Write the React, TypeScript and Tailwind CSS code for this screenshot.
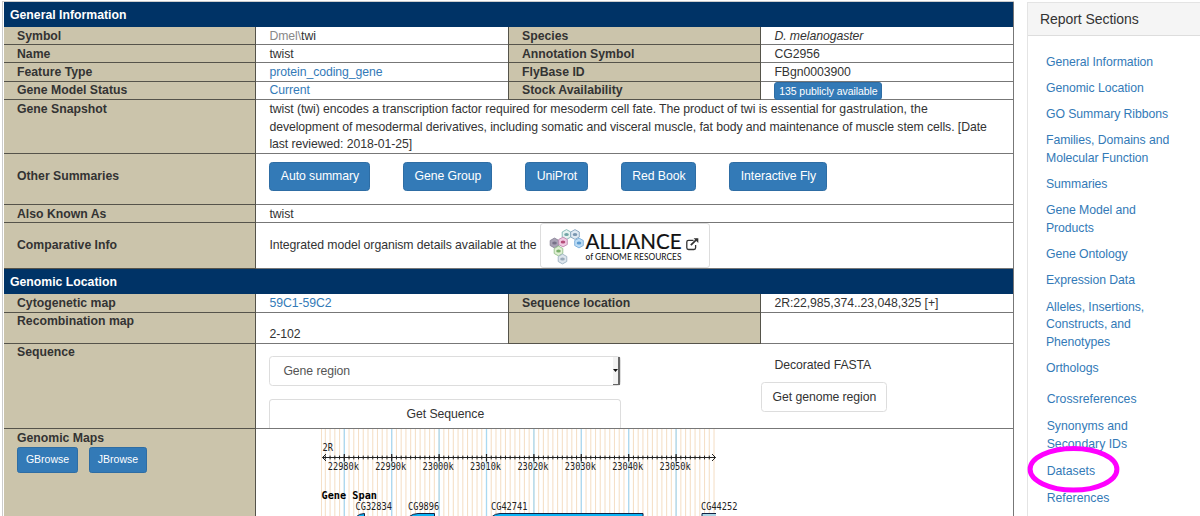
import React from 'react'

const LABEL = "bg-[#cbc4ab] border-[#55534a] pl-[13px] font-bold tracking-normal shrink-0"

const Heading = ({ children }: { children: React.ReactNode }) => (
    <h2 className="h-[25px] shrink-0 bg-[#003366] text-white font-bold tracking-normal pl-[6px] leading-[26px]">{children}</h2>
)

type RowProps = {
    label: React.ReactNode;
    height: string;
    labelClass?: string;
    valueClass?: string;
    label2?: string;
    value2?: React.ReactNode;
    children: React.ReactNode;
}

const Row = ({ label, height, labelClass = "pt-px", valueClass = "pt-px", label2, value2, children }: RowProps) => (
    <div className={"flex shrink-0 border-[#666] " + height}>
        <div className={LABEL + " w-[252px] border-r border-b " + labelClass}>{label}</div>
        <div className={"flex-1 border-b border-[#777] pl-[13.4px] " + valueClass}>{children}</div>
        {label2 !== undefined && (
            <>
                <div className={LABEL + " w-[253px] border-x border-b " + labelClass}>{label2}</div>
                <div className="w-[252px] shrink-0 border-b border-[#777] pl-[13.4px] pt-px">{value2}</div>
            </>
        )}
    </div>
)

const BlueLink = ({ children }: { children: React.ReactNode }) => (
    <a href="#" className="text-[#337ab7]">{children}</a>
)

const summaries = [
    { name: "Auto summary", width: "w-[101px]" },
    { name: "Gene Group", width: "w-[89px]" },
    { name: "UniProt", width: "w-[63px]" },
    { name: "Red Book", width: "w-[75px]" },
    { name: "Interactive Fly", width: "w-[98px]" },
]

const sections = [
    ["General Information"],
    ["Genomic Location"],
    ["GO Summary Ribbons"],
    ["Families, Domains and", "Molecular Function"],
    ["Summaries"],
    ["Gene Model and", "Products"],
    ["Gene Ontology"],
    ["Expression Data"],
    ["Alleles, Insertions,", "Constructs, and", "Phenotypes"],
    ["Orthologs"],
]

const moreSections = [
    ["Crossreferences"],
    ["Synonyms and", "Secondary IDs"],
    ["Datasets"],
    ["References"],
]

const hexes = [
    { x: 16.5, y: 5.5, fill: "#e6f2f1", stroke: "#7fb5b3", dot: "#4a8a8c" },
    { x: 25, y: 5.5, fill: "#dfe9f2", stroke: "#86a3bd", dot: "#58799a" },
    { x: 4.5, y: 14, fill: "#a9a3b5", stroke: "#8a8499", dot: "#67607a" },
    { x: 13, y: 13, fill: "#f0c9e2", stroke: "#bd8db2", dot: "#a02355" },
    { x: 29, y: 14, fill: "#bcdcf5", stroke: "#79aedb", dot: "#3a84c4" },
    { x: 8.5, y: 22, fill: "#e0f0d4", stroke: "#93c08a", dot: "#5a9a4a" },
    { x: 12.5, y: 30, fill: "#dde5ec", stroke: "#9db2c2", dot: "#8296a8" },
]

const AllianceLogo = () => (
    <svg width="150" height="38" viewBox="0 0 150 38" className="block overflow-visible tracking-normal">
        {hexes.map((h, i) => (
            <g key={i} transform={`translate(${h.x} ${h.y})`}>
                <path d="M0 -4.9 L4.3 -2.5 V2.5 L0 4.9 L-4.3 2.5 V-2.5 Z" fill={h.fill} stroke={h.stroke} strokeWidth="0.9" />
                <ellipse rx="2.3" ry="1.5" fill={h.dot} opacity="0.75" />
            </g>
        ))}
        <text x="35.5" y="19.5" fontFamily="Lato, sans-serif" fontSize="21.5" fill="#111" stroke="#111" strokeWidth="0.2" textLength="96" lengthAdjust="spacingAndGlyphs">ALLIANCE</text>
        <text x="35.5" y="31" fontFamily="Lato, sans-serif" fontSize="10.2" fill="#111" textLength="96" lengthAdjust="spacingAndGlyphs">of GENOME RESOURCES</text>
        <g fill="none" stroke="#333" strokeWidth="1.3">
            <path d="M143.5 11.3 H138.5 Q136.8 11.3 136.8 13 V18.8 Q136.8 20.5 138.5 20.5 H144 Q145.6 20.5 145.6 18.8 V16" />
            <path d="M140.8 16.2 L147 10.2" strokeWidth="1.7" />
        </g>
        <path d="M143.6 9.2 H148.3 V13.9 Z" fill="#333" />
    </svg>
)

const ticks = Array.from({ length: 83 }, (_, i) => 4.34 + i * 4.74)
const majors = [22980, 22990, 23000, 23010, 23020, 23030, 23040, 23050]
const genes = [
    { name: "CG32834", x: 34.5 },
    { name: "CG9896", x: 87 },
    { name: "CG42741", x: 170 },
    { name: "CG44252", x: 380 },
]

const GenomeMap = () => (
    <svg width="430" height="87" viewBox="0 0 430 87" className="tracking-normal" fontFamily="'DejaVu Sans Mono', monospace" fontSize="9.8" fill="#222">
        <line x1="0.5" x2="0.5" y1="0" y2="87" stroke="#f5e0c8" />
        {ticks.map((x) => (
            <line key={x} x1={x} x2={x} y1="0" y2="87" stroke="#f5e0c8" strokeWidth="1.1" />
        ))}
        {majors.map((m, i) => (
            <line key={m} x1={23.3 + i * 47.4} x2={23.3 + i * 47.4} y1="0" y2="87" stroke="#a9d9f2" strokeWidth="1.3" />
        ))}
        <g stroke="#222" fill="none">
            <path d="M1.5 28.5 H394.5" strokeWidth="1" />
            <path d="M5 25 L1.5 28.5 L5 32 M391 25 L394.5 28.5 L391 32" strokeWidth="1" />
            {ticks.slice(0, 82).map((x) => (
                <line key={x} x1={x} x2={x} y1="26.6" y2="30.4" strokeWidth="1" />
            ))}
            {majors.map((m, i) => (
                <line key={m} x1={23.3 + i * 47.4} x2={23.3 + i * 47.4} y1="25" y2="32.5" strokeWidth="1.2" />
            ))}
        </g>
        <text x="1.5" y="22.2" textLength="10.5" lengthAdjust="spacingAndGlyphs">2R</text>
        {majors.map((m, i) => (
            <text key={m} x={6.8 + i * 47.4} y="40.5" textLength="31" lengthAdjust="spacingAndGlyphs">{`${m}k`}</text>
        ))}
        <text x="0.5" y="70.2" fontWeight="bold" fontSize="10" fill="#000" textLength="55.5" lengthAdjust="spacingAndGlyphs">{"Gene\u00a0Span"}</text>
        {genes.map((g) => (
            <text key={g.name} x={g.x} y="80.8" textLength={g.name.length * 5.2} lengthAdjust="spacingAndGlyphs">{g.name}</text>
        ))}
        <g fill="#0cb4f5" stroke="#124" strokeWidth="1">
            <path d="M35 88 Q38 84.5 43.5 84.5 V88" />
            <path d="M87.5 88 Q92 84.5 97 84.5 H113.5 V88" />
            <path d="M170.5 88 Q174 84.5 179 84.5 H322 V88" />
        </g>
        <path d="M395 84.5 H381 V88 H395" fill="#add8e6" />
        <path d="M395 84.5 H381 V88" fill="none" stroke="#124" />
    </svg>
)

export default function App() {
    return (
        <main className="w-[1200px] h-[516px] overflow-hidden bg-white flex font-['Liberation_Sans',Arial,sans-serif] text-[12.25px] leading-[17.5px] tracking-[-0.065px] text-[#333]">
            {/* Report table */}
            <div className="w-[1012px] ml-[2px] mt-px shrink-0 h-[515px] border-l border-t border-[#ccc] pl-px overflow-hidden">
                <div className="flex flex-col border-r border-[#777] h-[560px]">
                    <Heading>General Information</Heading>
                    <Row label="Symbol" height="h-[18px]" label2="Species" value2={<i>D. melanogaster</i>}>
                        <span className="text-[#888]">Dmel\</span>twi
                    </Row>
                    <Row label="Name" height="h-[18px]" label2="Annotation Symbol" value2="CG2956">twist</Row>
                    <Row label="Feature Type" height="h-[19px]" label2="FlyBase ID" value2="FBgn0003900">
                        <BlueLink>protein_coding_gene</BlueLink>
                    </Row>
                    <Row
                        label="Gene Model Status"
                        height="h-[18px]"
                        labelClass=""
                        valueClass=""
                        label2="Stock Availability"
                        value2={
                            <button className="-mt-px flex items-center justify-center w-[108px] h-[18px] rounded-[3px] bg-[#337ab7] border border-[#2e6da4] text-white text-[10.5px] leading-none">
                                135 publicly available
                            </button>
                        }
                    >
                        <BlueLink>Current</BlueLink>
                    </Row>
                    <Row label="Gene Snapshot" height="h-[54px]">
                        <p className="whitespace-nowrap">
                            twist (twi) encodes a transcription factor required for mesoderm cell fate. The product of twi is essential for <span className="tracking-[0.08px]">gastrulation, the</span><br />
                            development of mesodermal derivatives, including somatic and visceral muscle, fat body and maintenance of muscle stem cells. [Date<br />
                            last reviewed: 2018-01-25]
                        </p>
                    </Row>
                    <Row label="Other Summaries" height="h-[51px]" labelClass="pt-[14px]" valueClass="flex gap-[33px] pt-[8px]">
                        {summaries.map((s) => (
                            <button key={s.name} className={"h-[29px] pt-px rounded-[3.5px] bg-[#337ab7] border border-[#2e6da4] text-white " + s.width}>
                                {s.name}
                            </button>
                        ))}
                    </Row>
                    <Row label="Also Known As" height="h-[18px]">twist</Row>
                    <Row label="Comparative Info" height="h-[46px]" labelClass="pt-[14px]" valueClass="flex">
                        <span className="pt-[14px] w-[270.6px] whitespace-nowrap">Integrated model organism details available at the</span>
                        <a href="#" className="w-[170px] h-[45px] rounded-[3px] border border-[#ddd] bg-white pl-[9px] pt-[5px]">
                            <AllianceLogo />
                        </a>
                    </Row>

                    <Heading>Genomic Location</Heading>
                    <Row label="Cytogenetic map" height="h-[19px]" label2="Sequence location" value2="2R:22,985,374..23,048,325 [+]">
                        <BlueLink>59C1-59C2</BlueLink>
                    </Row>
                    <Row label="Recombination map" height="h-[31px]" labelClass="" valueClass="pt-[13px]" label2="" value2="">2-102</Row>
                    <Row label="Sequence" height="h-[85px]" labelClass="" valueClass="flex">
                        <div className="w-[352px] pt-[12px] flex flex-col gap-[13px]">
                            <div className="h-[30px] shrink-0 rounded-[3.5px] border border-[#ddd] pl-[13px] flex items-center justify-between text-[#555]">
                                <span className="pt-px">Gene region</span>
                                <span className="flex h-full w-[7px] items-center justify-center border-r-2 border-b border-[#666] bg-[#f2f2f2]">
                                    <svg width="5" height="3" viewBox="0 0 5 3"><path d="M0 0H5L2.5 3Z" fill="#111" /></svg>
                                </span>
                            </div>
                            <button className="h-[29px] pt-[2px] shrink-0 rounded-t-[3.5px] border border-b-0 border-[#ddd]">Get Sequence</button>
                        </div>
                        <div className="ml-[140px] pt-[13px]">
                            <p className="pl-[13px]">Decorated FASTA</p>
                            <button className="mt-[7px] pt-[2px] w-[126px] h-[30px] rounded-[3.5px] border border-[#ddd]">Get genome region</button>
                        </div>
                    </Row>
                    <Row
                        height="h-[120px]"
                        valueClass=""
                        label={
                            <>
                                Genomic Maps
                                <div className="-mt-px flex gap-[11px] font-normal text-[10.5px] text-white">
                                    <button className="w-[61px] h-[26px] rounded-[2.6px] bg-[#337ab7] border border-[#2e6da4]">GBrowse</button>
                                    <button className="w-[58px] h-[26px] rounded-[2.6px] bg-[#337ab7] border border-[#2e6da4]">JBrowse</button>
                                </div>
                            </>
                        }
                    >
                        <div className="pl-[51.6px]"><GenomeMap /></div>
                    </Row>
                </div>
            </div>

            {/* Sections panel */}
            <aside className="relative ml-[13px] mt-[2px] flex-1 border-l border-t border-[#e4e4e4]">
                <h3 className="h-[33px] bg-[#f5f5f5] border-b border-[#ddd] pl-[12px] text-[14px] leading-[32px]">Report Sections</h3>
                <ul className="pt-[17.7px] pl-[18px] flex flex-col gap-[8.75px] text-[#337ab7]">
                    {sections.map((lines) => (
                        <li key={lines[0]}>
                            {lines.map((l) => <a key={l} href="#" className="block">{l}</a>)}
                        </li>
                    ))}
                </ul>
                <ul className="pt-[12.4px] pl-[18.7px] flex flex-col gap-[9px] leading-[18px] tracking-normal text-[#337ab7]">
                    {moreSections.map((lines) => (
                        <li key={lines[0]}>
                            {lines.map((l) => <a key={l} href="#" className="block">{l}</a>)}
                        </li>
                    ))}
                </ul>
                {/* highlight around Datasets */}
                <svg className="absolute left-[-2px] top-[440px]" width="96" height="52" viewBox="0 0 96 52">
                    <ellipse cx="47.5" cy="26.2" rx="43.4" ry="20.8" fill="none" stroke="#ff00ff" strokeWidth="5" />
                </svg>
            </aside>
        </main>
    )
}
